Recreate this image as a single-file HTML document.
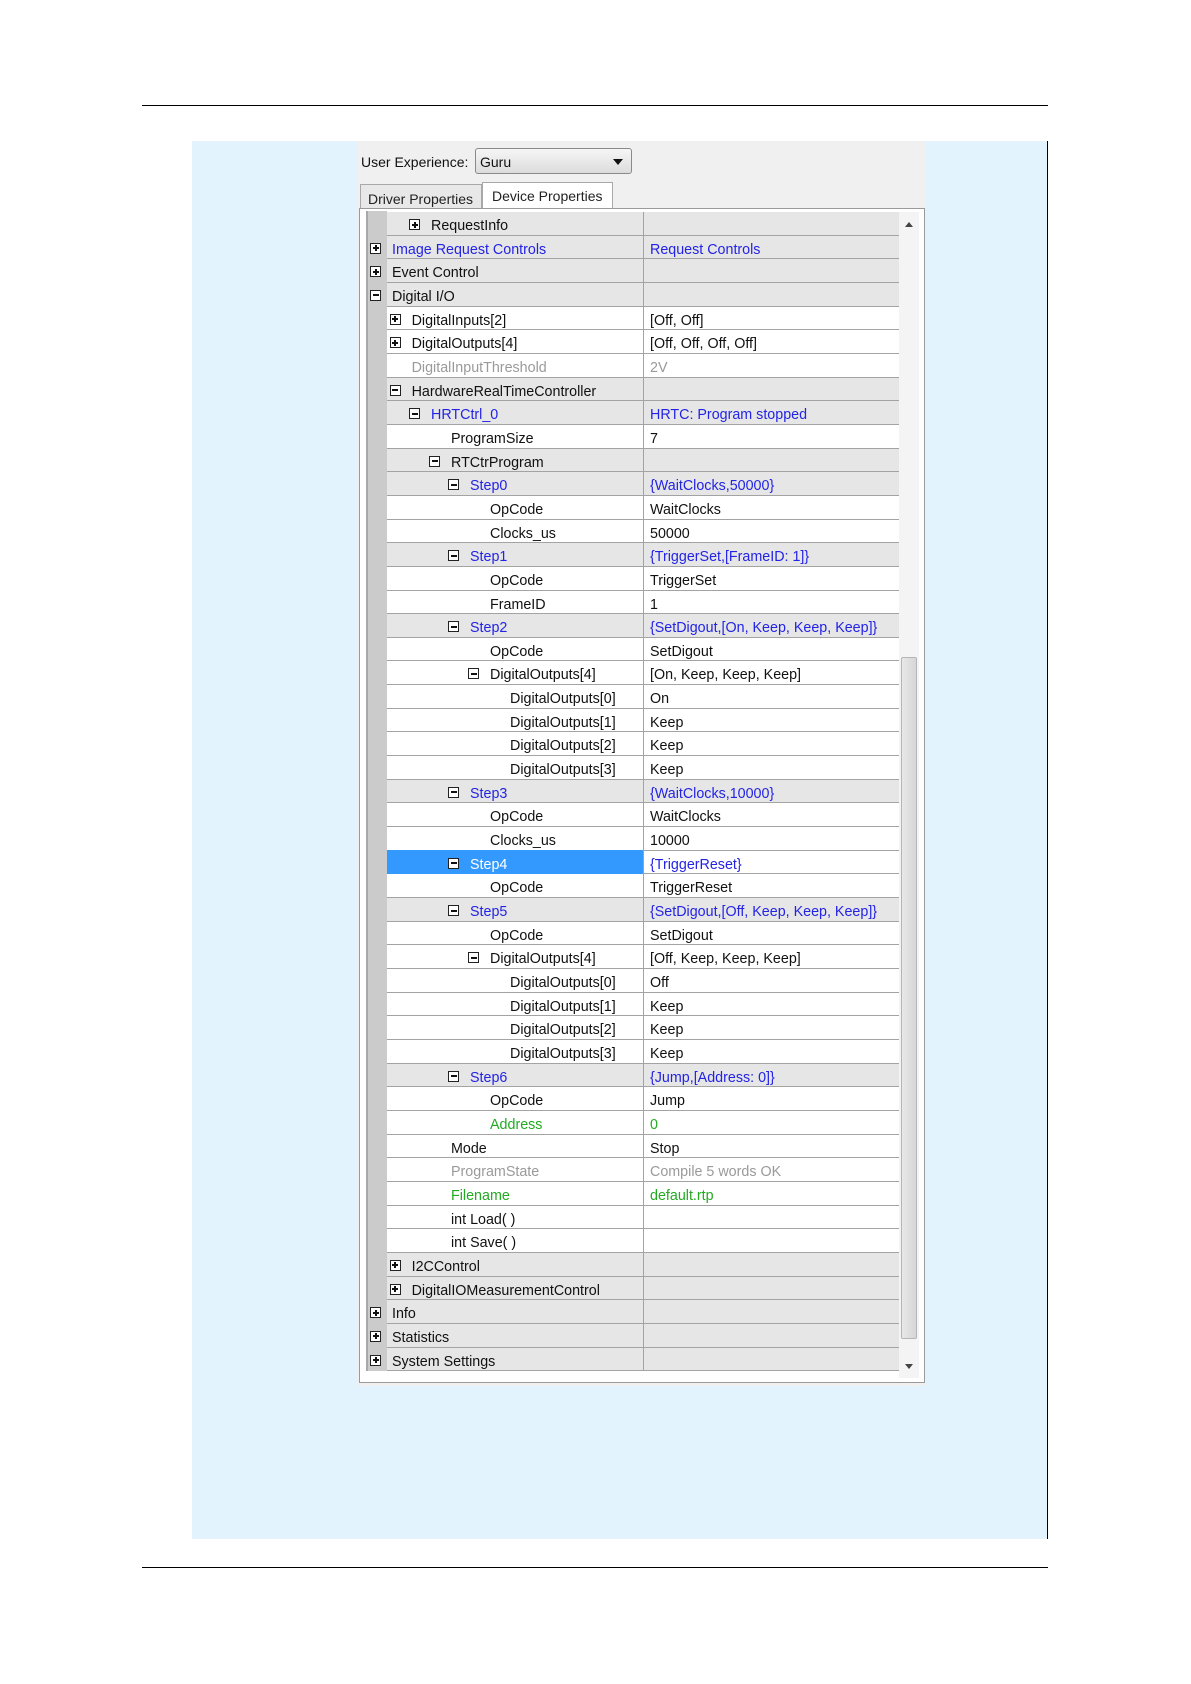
<!DOCTYPE html>
<html><head><meta charset="utf-8">
<style>
html,body{margin:0;padding:0;background:#fff;}
body{width:1191px;height:1684px;position:relative;overflow:hidden;font-family:"Liberation Sans",sans-serif;}
.rule{position:absolute;left:142px;width:906px;height:1px;background:#000;}
.blue{position:absolute;left:192px;top:141px;width:855px;height:1398px;background:#e3f3fd;border-right:1px solid #000;}
.panel{position:absolute;left:358px;top:141px;width:567px;height:1245px;background:#f0f0f0;}
.lbl{position:absolute;left:361px;top:154px;font-size:14px;color:#111;}
.combo{position:absolute;left:475px;top:148px;width:157px;height:26px;border:1px solid #8a8a8a;border-radius:3px;background:linear-gradient(#f6f6f6,#dcdcdc);box-sizing:border-box;font-size:14px;padding:5px 0 0 4px;color:#111;}
.combo:after{content:"";position:absolute;right:8px;top:10px;border-left:5px solid transparent;border-right:5px solid transparent;border-top:6px solid #111;}
.tab{position:absolute;font-size:14px;color:#222;box-sizing:border-box;border:1px solid #a8a8a8;border-bottom:none;}
.frame{position:absolute;left:359px;top:208px;width:566px;height:1175px;border:1px solid #9a9a9a;box-sizing:border-box;background:#fff;}
.grid{position:absolute;left:366px;top:212px;width:533px;}
.r{position:relative;height:23.67px;box-sizing:border-box;border-bottom:1.5px solid #a3a3a3;background:#fff;font-size:14.3px;line-height:22px;color:#111;white-space:nowrap;}
.r.g{background:#e6e6e6;}
.r:before{content:"";position:absolute;left:0;top:-1px;width:21px;height:24.5px;background:#cbcbcb;border-left:2px solid #a8a8a8;box-sizing:border-box;}
.r .c{position:absolute;left:277px;top:0;width:256px;height:100%;border-left:1.5px solid #a3a3a3;}
.r .v{position:absolute;left:284px;top:3px;}
.n{position:absolute;top:3px;}
.i{position:absolute;left:-22px;top:4px;width:11px;height:11px;border:1px solid #222;box-sizing:border-box;background:#fff;}
.i:before{content:"";position:absolute;left:1.5px;top:3.5px;width:6px;height:2px;background:#111;}
.i.p:after{content:"";position:absolute;left:3.5px;top:1.5px;width:2px;height:6px;background:#111;}
.b{color:#2323e6;} .gr{color:#9a9a9a;} .gn{color:#22aa22;}
.sel .selbg{position:absolute;left:21px;top:-1px;width:256px;height:24.5px;background:#3399ff;}
.sel .n{color:#fff;}
.sb{position:absolute;left:899px;top:212px;width:20px;height:1166px;background:#f4f4f4;}
.thumb{position:absolute;left:901px;top:657px;width:16px;height:682px;background:linear-gradient(90deg,#e8e8e8,#d6d6d6);border:1px solid #b5b5b5;box-sizing:border-box;border-radius:2px;}
</style></head><body>
<div class="rule" style="top:105px"></div>
<div class="blue"></div>
<div class="panel"></div>
<div class="lbl">User Experience:</div>
<div class="combo">Guru</div>
<div class="tab" style="left:360px;top:184px;width:122px;height:25px;background:#e8e8e8;padding:6px 0 0 7px;">Driver Properties</div>
<div class="tab" style="left:482px;top:182px;width:131px;height:27px;background:#fff;padding:5px 0 0 9px;">Device Properties</div>
<div class="frame"></div>
<div class="sb"></div>
<div class="thumb"></div>
<div style="position:absolute;left:905px;top:222px;border-left:4px solid transparent;border-right:4px solid transparent;border-bottom:5px solid #444;"></div>
<div style="position:absolute;left:905px;top:1364px;border-left:4px solid transparent;border-right:4px solid transparent;border-top:5px solid #444;"></div>
<div class="grid">
<div class="r g"><span class="c"></span><span class="n" style="left:65px"><i class="i p"></i>RequestInfo</span></div>
<div class="r g"><span class="c"></span><span class="n b" style="left:26px"><i class="i p"></i>Image Request Controls</span><span class="v b">Request Controls</span></div>
<div class="r g"><span class="c"></span><span class="n" style="left:26px"><i class="i p"></i>Event Control</span></div>
<div class="r g"><span class="c"></span><span class="n" style="left:26px"><i class="i"></i>Digital I/O</span></div>
<div class="r"><span class="c"></span><span class="n" style="left:45.6px"><i class="i p"></i>DigitalInputs[2]</span><span class="v">[Off, Off]</span></div>
<div class="r"><span class="c"></span><span class="n" style="left:45.6px"><i class="i p"></i>DigitalOutputs[4]</span><span class="v">[Off, Off, Off, Off]</span></div>
<div class="r"><span class="c"></span><span class="n gr" style="left:45.6px">DigitalInputThreshold</span><span class="v gr">2V</span></div>
<div class="r g"><span class="c"></span><span class="n" style="left:45.6px"><i class="i"></i>HardwareRealTimeController</span></div>
<div class="r g"><span class="c"></span><span class="n b" style="left:65px"><i class="i"></i>HRTCtrl_0</span><span class="v b">HRTC: Program stopped</span></div>
<div class="r"><span class="c"></span><span class="n" style="left:85px">ProgramSize</span><span class="v">7</span></div>
<div class="r g"><span class="c"></span><span class="n" style="left:85px"><i class="i"></i>RTCtrProgram</span></div>
<div class="r g"><span class="c"></span><span class="n b" style="left:104px"><i class="i"></i>Step0</span><span class="v b">{WaitClocks,50000}</span></div>
<div class="r"><span class="c"></span><span class="n" style="left:124px">OpCode</span><span class="v">WaitClocks</span></div>
<div class="r"><span class="c"></span><span class="n" style="left:124px">Clocks_us</span><span class="v">50000</span></div>
<div class="r g"><span class="c"></span><span class="n b" style="left:104px"><i class="i"></i>Step1</span><span class="v b">{TriggerSet,[FrameID: 1]}</span></div>
<div class="r"><span class="c"></span><span class="n" style="left:124px">OpCode</span><span class="v">TriggerSet</span></div>
<div class="r"><span class="c"></span><span class="n" style="left:124px">FrameID</span><span class="v">1</span></div>
<div class="r g"><span class="c"></span><span class="n b" style="left:104px"><i class="i"></i>Step2</span><span class="v b">{SetDigout,[On, Keep, Keep, Keep]}</span></div>
<div class="r"><span class="c"></span><span class="n" style="left:124px">OpCode</span><span class="v">SetDigout</span></div>
<div class="r"><span class="c"></span><span class="n" style="left:124px"><i class="i"></i>DigitalOutputs[4]</span><span class="v">[On, Keep, Keep, Keep]</span></div>
<div class="r"><span class="c"></span><span class="n" style="left:144px">DigitalOutputs[0]</span><span class="v">On</span></div>
<div class="r"><span class="c"></span><span class="n" style="left:144px">DigitalOutputs[1]</span><span class="v">Keep</span></div>
<div class="r"><span class="c"></span><span class="n" style="left:144px">DigitalOutputs[2]</span><span class="v">Keep</span></div>
<div class="r"><span class="c"></span><span class="n" style="left:144px">DigitalOutputs[3]</span><span class="v">Keep</span></div>
<div class="r g"><span class="c"></span><span class="n b" style="left:104px"><i class="i"></i>Step3</span><span class="v b">{WaitClocks,10000}</span></div>
<div class="r"><span class="c"></span><span class="n" style="left:124px">OpCode</span><span class="v">WaitClocks</span></div>
<div class="r"><span class="c"></span><span class="n" style="left:124px">Clocks_us</span><span class="v">10000</span></div>
<div class="r sel"><span class="selbg"></span><span class="c"></span><span class="n" style="left:104px"><i class="i"></i>Step4</span><span class="v b">{TriggerReset}</span></div>
<div class="r"><span class="c"></span><span class="n" style="left:124px">OpCode</span><span class="v">TriggerReset</span></div>
<div class="r g"><span class="c"></span><span class="n b" style="left:104px"><i class="i"></i>Step5</span><span class="v b">{SetDigout,[Off, Keep, Keep, Keep]}</span></div>
<div class="r"><span class="c"></span><span class="n" style="left:124px">OpCode</span><span class="v">SetDigout</span></div>
<div class="r"><span class="c"></span><span class="n" style="left:124px"><i class="i"></i>DigitalOutputs[4]</span><span class="v">[Off, Keep, Keep, Keep]</span></div>
<div class="r"><span class="c"></span><span class="n" style="left:144px">DigitalOutputs[0]</span><span class="v">Off</span></div>
<div class="r"><span class="c"></span><span class="n" style="left:144px">DigitalOutputs[1]</span><span class="v">Keep</span></div>
<div class="r"><span class="c"></span><span class="n" style="left:144px">DigitalOutputs[2]</span><span class="v">Keep</span></div>
<div class="r"><span class="c"></span><span class="n" style="left:144px">DigitalOutputs[3]</span><span class="v">Keep</span></div>
<div class="r g"><span class="c"></span><span class="n b" style="left:104px"><i class="i"></i>Step6</span><span class="v b">{Jump,[Address: 0]}</span></div>
<div class="r"><span class="c"></span><span class="n" style="left:124px">OpCode</span><span class="v">Jump</span></div>
<div class="r"><span class="c"></span><span class="n gn" style="left:124px">Address</span><span class="v gn">0</span></div>
<div class="r"><span class="c"></span><span class="n" style="left:85px">Mode</span><span class="v">Stop</span></div>
<div class="r"><span class="c"></span><span class="n gr" style="left:85px">ProgramState</span><span class="v gr">Compile 5 words OK</span></div>
<div class="r"><span class="c"></span><span class="n gn" style="left:85px">Filename</span><span class="v gn">default.rtp</span></div>
<div class="r"><span class="c"></span><span class="n" style="left:85px">int Load( )</span></div>
<div class="r"><span class="c"></span><span class="n" style="left:85px">int Save( )</span></div>
<div class="r g"><span class="c"></span><span class="n" style="left:45.6px"><i class="i p"></i>I2CControl</span></div>
<div class="r g"><span class="c"></span><span class="n" style="left:45.6px"><i class="i p"></i>DigitalIOMeasurementControl</span></div>
<div class="r g"><span class="c"></span><span class="n" style="left:26px"><i class="i p"></i>Info</span></div>
<div class="r g"><span class="c"></span><span class="n" style="left:26px"><i class="i p"></i>Statistics</span></div>
<div class="r g"><span class="c"></span><span class="n" style="left:26px"><i class="i p"></i>System Settings</span></div>
</div>
<div class="rule" style="top:1567px"></div>
</body></html>
